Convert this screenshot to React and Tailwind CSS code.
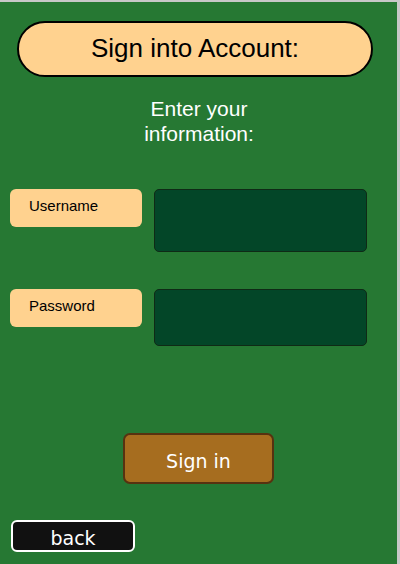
export default function App() {
  return (
    <div className="w-[400px] h-[564px] bg-[#c8c8c8] pt-[2px] pr-[3px]">
      <div className="w-[397px] h-[562px] bg-[#267833] flex flex-col font-['Liberation_Sans',Arial,sans-serif]">
        <div className="mt-[19px] ml-[17px] w-[356px] h-[56px] rounded-full border-2 border-black bg-[#ffd28f] flex items-center justify-center pb-[3px]">
          <span className="text-[26px] leading-none text-black">Sign into Account:</span>
        </div>
        <div className="mt-[19px] mx-auto w-[130px] text-center text-white text-[21px] leading-[25px] pl-[1px]">
          Enter your information:
        </div>
        <div className="mt-[43px] flex items-start">
          <div className="ml-[10px] w-[132px] h-[38px] rounded-[6px] bg-[#ffd28f] pl-[19px] pt-[8px] text-[15px] leading-[18px] text-black">
            Username
          </div>
          <div className="ml-[12px] w-[213px] h-[63px] rounded-[5px] border border-[#0f2a16] bg-[#034628]"></div>
        </div>
        <div className="mt-[37px] flex items-start">
          <div className="ml-[10px] w-[132px] h-[38px] rounded-[6px] bg-[#ffd28f] pl-[19px] pt-[8px] text-[15px] leading-[18px] text-black">
            Password
          </div>
          <div className="ml-[12px] w-[213px] h-[57px] rounded-[5px] border border-[#0f2a16] bg-[#034628]"></div>
        </div>
        <div className="mt-[87px] ml-[123px] w-[151px] h-[51px] rounded-[7px] border-[2px] border-[#573210] bg-[#a66d1f] flex items-center justify-center pt-[6px]">
          <span className="font-['DejaVu_Sans',Verdana,sans-serif] text-[19px] leading-none text-white">Sign in</span>
        </div>
        <div className="mt-[36px] ml-[11px] w-[124px] h-[32px] rounded-[6px] border-2 border-white bg-[#111111] flex items-end justify-center">
          <span className="font-['DejaVu_Sans',Verdana,sans-serif] text-[19px] leading-[24px] text-white">back</span>
        </div>
      </div>
    </div>
  );
}
